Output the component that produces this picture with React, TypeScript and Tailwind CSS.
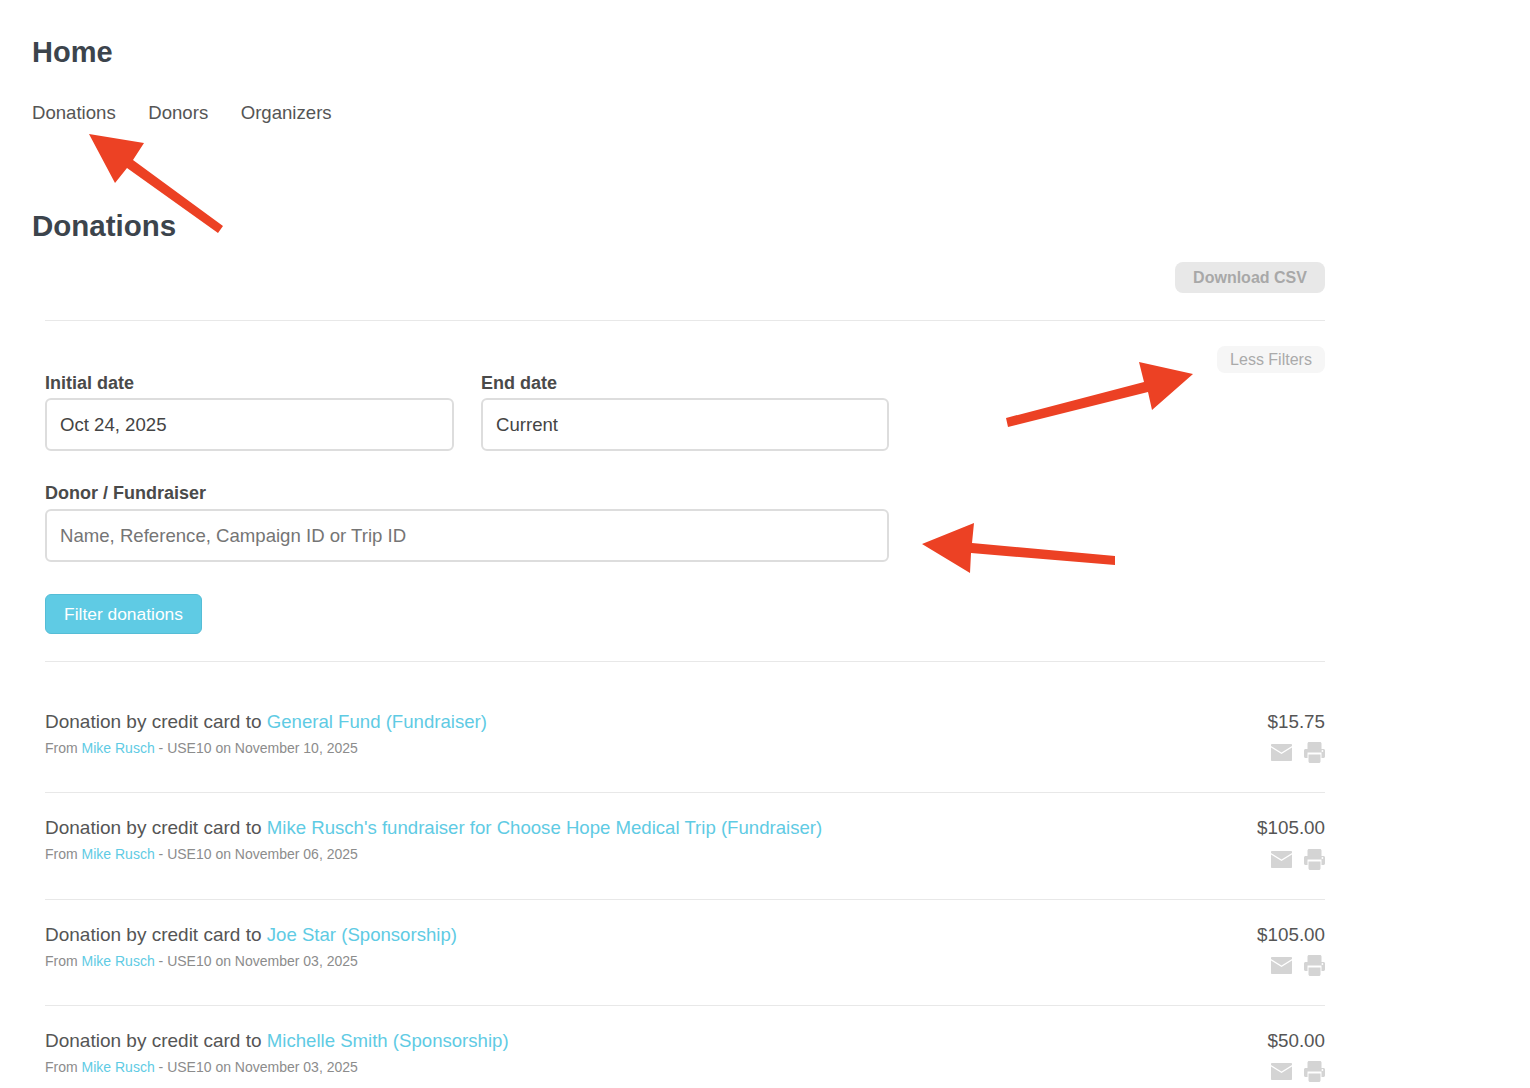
const rows = [
  { to: "General Fund (Fundraiser)", date: "November 10, 2025", amount: "$15.75", h: "h-[131px]", pt: "pt-[49px]", iconMt: "mt-[9px]" },
  { to: "Mike Rusch's fundraiser for Choose Hope Medical Trip (Fundraiser)", date: "November 06, 2025", amount: "$105.00", h: "h-[107px]", pt: "pt-[24px]", iconMt: "mt-[10px]" },
  { to: "Joe Star (Sponsorship)", date: "November 03, 2025", amount: "$105.00", h: "h-[106px]", pt: "pt-[24px]", iconMt: "mt-[9px]" },
  { to: "Michelle Smith (Sponsorship)", date: "November 03, 2025", amount: "$50.00", h: "h-[106px]", pt: "pt-[24px]", iconMt: "mt-[9px]" },
];

function MailIcon() {
  return (
    <svg width="21" height="17" viewBox="0 0 21 17" fill="#d4d4d4">
      <path d="M0.8 0 H20.2 C20.7 0 21 0.3 21 0.8 V2 L10.5 8.4 L0 2 V0.8 C0 0.3 0.3 0 0.8 0 Z" />
      <path d="M0 3.6 L10.5 10 L21 3.6 V16.2 C21 16.7 20.7 17 20.2 17 H0.8 C0.3 17 0 16.7 0 16.2 Z" />
    </svg>
  );
}

function PrintIcon() {
  return (
    <svg width="21" height="21" viewBox="0 0 21 21" fill="#d4d4d4">
      <path d="M3.5 7 V1.5 C3.5 0.7 4.2 0 5 0 H16 C16.8 0 17.5 0.7 17.5 1.5 V7 H19.5 C20.3 7 21 7.7 21 8.5 V14.5 C21 15.3 20.3 16 19.5 16 H17.5 V10.5 H3.5 V16 H1.5 C0.7 16 0 15.3 0 14.5 V8.5 C0 7.7 0.7 7 1.5 7 Z" />
      <path d="M4.5 12.5 H16.5 L16.5 19.5 C16.5 20.3 15.8 21 15 21 H6 C5.2 21 4.5 20.3 4.5 19.5 Z" />
      <circle cx="18.4" cy="9" r="0.9" fill="#fff" />
    </svg>
  );
}

function Arrows() {
  return (
    <svg className="absolute left-0 top-0 pointer-events-none" width="1530" height="1088" fill="#ec4124">
      <polygon points="89,134 144,143 133,160 223,226 218,233 127,168 115,183" />
      <polygon points="1193,374 1139,362 1144,382 1006,418 1008,427 1148,392 1152,410" />
      <polygon points="922,544 974,523 972,543 1115,556 1115,565 971,553 970,573" />
    </svg>
  );
}

export default function App() {
  return (
    <div className="relative h-[1088px] overflow-hidden bg-white font-['Liberation_Sans',Arial,sans-serif] text-[#555]">
      <div className="pl-8 pt-[34px]">
        <h1 className="text-[29px] leading-[36px] font-bold text-[#3c444c]">Home</h1>
        <nav className="mt-[30px] flex gap-[32.5px] text-[18.6px] leading-[26px] text-[#555]">
          <a>Donations</a>
          <a>Donors</a>
          <a>Organizers</a>
        </nav>
        <h2 className="mt-[80px] text-[29.5px] leading-[40px] font-bold text-[#3c444c]">Donations</h2>
      </div>

      <div className="ml-[45px] w-[1280px]">
        <div className="mt-[16px] flex justify-end border-b border-[#e8e8e8] pb-[27px]">
          <button className="h-[31px] w-[150px] rounded-[8px] bg-[#e8e8e8] text-[16px] font-bold text-[#a8a8a8]">Download CSV</button>
        </div>

        <div className="relative border-b border-[#e8e8e8] pb-[27px]">
          <button className="absolute right-0 top-[25px] h-[27px] w-[108px] rounded-[8px] bg-[#f6f6f6] text-[16px] text-[#aaa]">Less Filters</button>
          <div className="flex w-[844px] gap-[27px] pt-[50px]">
            <label className="w-[409px]">
              <span className="block text-[18px] leading-[24px] font-bold text-[#4a4a4a]">Initial date</span>
              <input readOnly value="Oct 24, 2025" className="mt-[3px] h-[53px] w-full rounded-[6px] border-2 border-[#ddd] px-[13px] text-[18.6px] text-[#444] outline-none" />
            </label>
            <label className="w-[408px]">
              <span className="block text-[18px] leading-[24px] font-bold text-[#4a4a4a]">End date</span>
              <input readOnly value="Current" className="mt-[3px] h-[53px] w-full rounded-[6px] border-2 border-[#ddd] px-[13px] text-[18.6px] text-[#444] outline-none" />
            </label>
          </div>
          <label className="mt-[30px] block w-[844px]">
            <span className="block text-[18px] leading-[24px] font-bold text-[#4a4a4a]">Donor / Fundraiser</span>
            <input readOnly placeholder="Name, Reference, Campaign ID or Trip ID" className="mt-[4px] h-[53px] w-full rounded-[6px] border-2 border-[#ddd] px-[13px] text-[18.6px] text-[#444] outline-none placeholder:text-[#757575]" />
          </label>
          <button className="mt-[32px] block h-[40px] w-[157px] rounded-[6px] border border-[#55bdd6] bg-[#5fcbe4] text-[17.4px] text-white">Filter donations</button>
        </div>

        {rows.map((r, i) => (
          <div key={i} className={`flex justify-between border-b border-[#e8e8e8] ${r.h} ${r.pt}`}>
            <div>
              <p className="text-[19px] leading-[22px] text-[#555]">
                Donation by credit card to <a className="text-[18.6px] text-[#5fcbe4]">{r.to}</a>
              </p>
              <p className="mt-[5px] text-[14px] leading-[20px] text-[#8c8c8c]">
                From <a className="text-[#5fcbe4]">Mike Rusch</a> - USE10 on {r.date}
              </p>
            </div>
            <div className="flex flex-col items-end">
              <p className="text-[18.8px] leading-[22px] text-[#555]">{r.amount}</p>
              <div className={`${r.iconMt} flex items-center gap-[12px]`}>
                <MailIcon />
                <PrintIcon />
              </div>
            </div>
          </div>
        ))}
      </div>
      <Arrows />
    </div>
  );
}
